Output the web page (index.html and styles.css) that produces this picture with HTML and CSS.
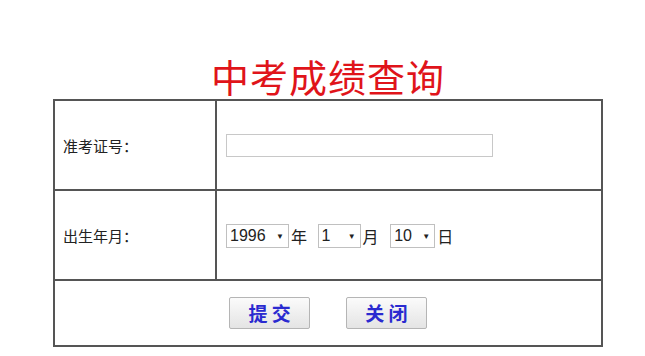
FILE: index.html
```html
<!DOCTYPE html>
<html lang="zh-CN">
<head>
<meta charset="utf-8">
<title>中考成绩查询</title>
<link rel="stylesheet" href="styles.css">
</head>
<body>
<div class="page">
  <h1 class="title">中考成绩查询</h1>
  <table class="form">
    <tr class="row">
      <td class="label">准考证号：</td>
      <td class="field"><input class="text-input" type="text"></td>
    </tr>
    <tr class="row">
      <td class="label">出生年月：</td>
      <td class="field">
        <span class="sel sel-year"><span class="sel-val">1996</span><span class="arrow">▼</span></span><span class="unit">年</span>
        <span class="sel sel-month"><span class="sel-val">1</span><span class="arrow">▼</span></span><span class="unit">月</span>
        <span class="sel sel-day"><span class="sel-val">10</span><span class="arrow">▼</span></span><span class="unit">日</span>
      </td>
    </tr>
    <tr class="row-actions">
      <td class="actions" colspan="2">
        <button class="btn" type="button">提 交</button>
        <button class="btn" type="button">关 闭</button>
      </td>
    </tr>
  </table>
</div>
</body>
</html>
```
FILE: styles.css
```css
html, body {
  margin: 0;
  padding: 0;
  background: #fff;
}
body {
  font-family: "Noto Sans CJK SC", "Liberation Sans", sans-serif;
  color: #222;
}
.page {
  padding-left: 53px;
  padding-top: 53px;
}
.title {
  margin: 0;
  width: 550px;
  text-align: center;
  font-family: "Noto Sans CJK SC", sans-serif;
  font-weight: 400;
  font-size: 38px;
  line-height: 46px;
  color: #e0141a;
  letter-spacing: 1px;
}
.form {
  border-collapse: collapse;
  width: 550px;
  margin: 0;
}
.form td {
  border: 2px solid #555;
  padding: 0;
}
.row td {
  height: 88px;
}
.label {
  width: 152px;
  padding-left: 8px !important;
  font-size: 15px;
  vertical-align: middle;
}
.field {
  padding-left: 9px !important;
  vertical-align: middle;
  font-size: 16px;
}
.text-input {
  display: block;
  box-sizing: border-box;
  width: 267px;
  height: 23px;
  border: 1px solid #c8c8c8;
  margin: 0;
  padding: 0;
}
.sel {
  display: inline-flex;
  align-items: center;
  box-sizing: border-box;
  height: 24px;
  border: 1px solid #c0c0c0;
  background: #fff;
  font-family: "Liberation Sans", sans-serif;
  font-size: 16px;
  padding-left: 3px;
  vertical-align: middle;
  color: #222;
}
.sel-year { width: 63px; }
.sel-month { width: 43px; margin-left: 7px; }
.sel-day { width: 45px; margin-left: 8px; }
.sel-val { flex: 1; }
.arrow {
  font-size: 8px;
  padding-right: 4px;
  color: #222;
}
.unit {
  font-size: 16px;
  vertical-align: middle;
  padding-left: 2px;
}
.row-actions td {
  height: 64px;
}
.actions {
  text-align: center;
  vertical-align: middle;
  padding-top: 0 !important;
}
.btn {
  box-sizing: border-box;
  width: 81px;
  height: 32px;
  margin: 0 16px;
  border: 1px solid #b5b5b5;
  border-radius: 2px;
  background: linear-gradient(#fbfbfb, #e4e4e4);
  color: #2a2ad0;
  font-family: "Noto Sans CJK SC", sans-serif;
  font-weight: 700;
  font-size: 19px;
  line-height: 28px;
  padding: 0;
}
```
